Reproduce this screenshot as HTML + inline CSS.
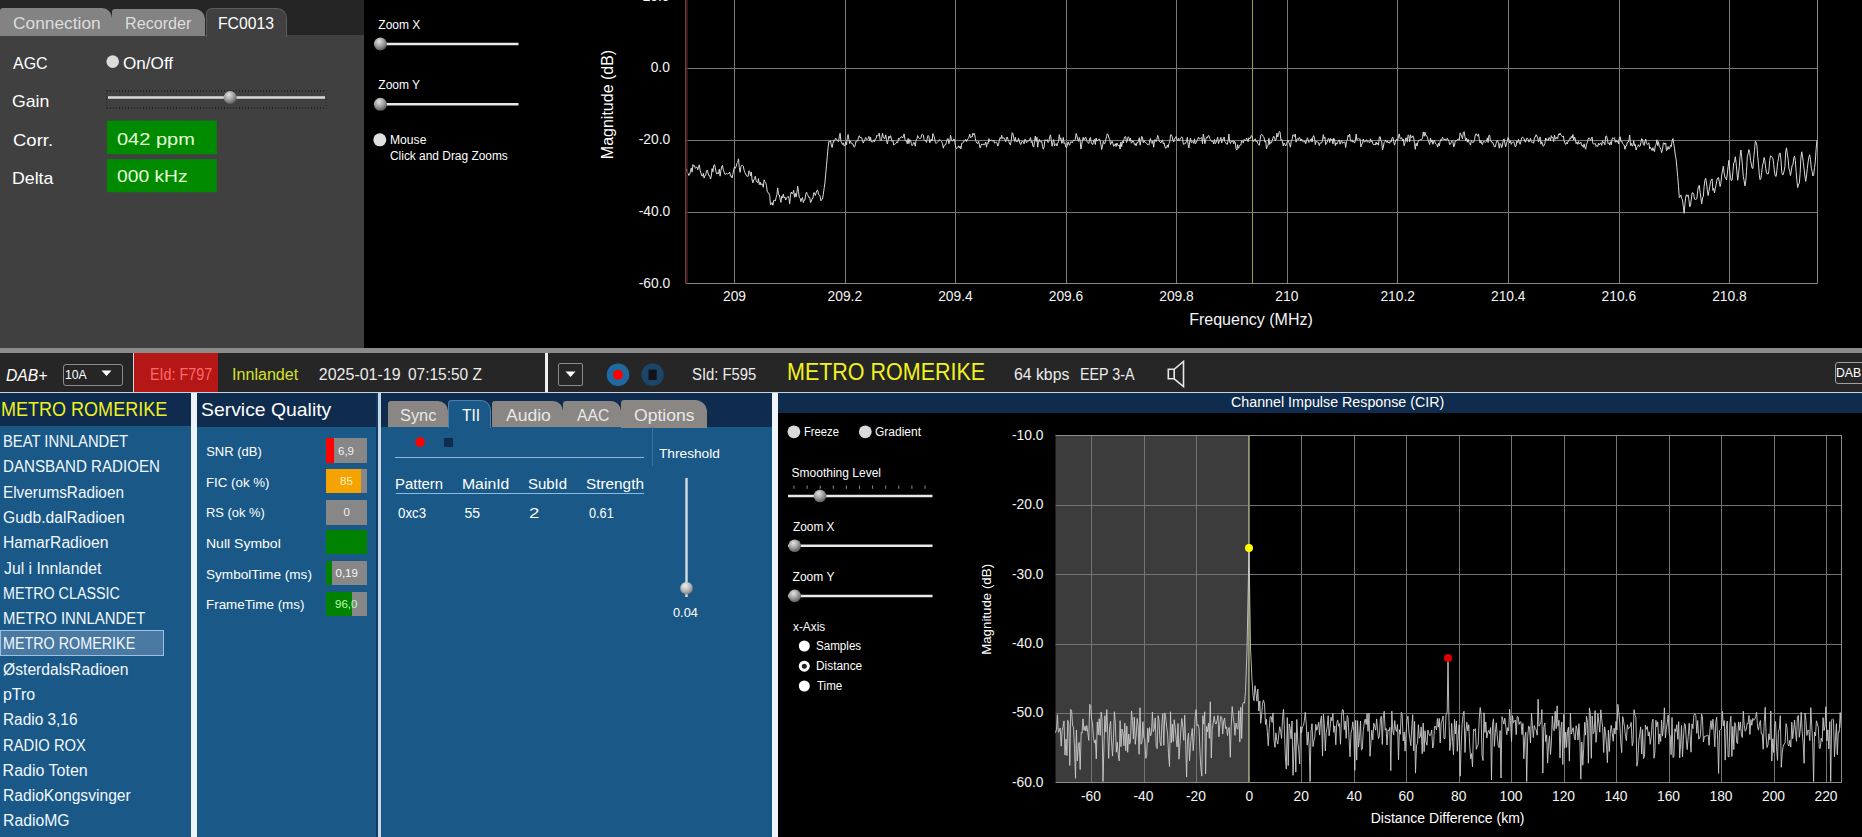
<!DOCTYPE html>
<html><head><meta charset="utf-8"><title>DAB receiver</title>
<style>
html,body{margin:0;padding:0;}
body{width:1862px;height:837px;overflow:hidden;background:#000;position:relative;font-family:"Liberation Sans",sans-serif;}
.t{position:absolute;white-space:nowrap;font-size:16px;line-height:16px;transform-origin:0 0;}
svg{position:absolute;left:0;top:0;}
</style></head><body>
<div style="position:absolute;left:0px;top:0px;width:363.5px;height:35px;background:#252525;"></div><div style="position:absolute;left:0px;top:35px;width:363.5px;height:313px;background:#404040;"></div><div style="position:absolute;left:0px;top:8px;width:112px;height:28px;background:#838383;border-radius:3px 10px 0 0"></div><div style="position:absolute;left:112px;top:8.5px;width:92.5px;height:27.5px;background:#838383;border-radius:3px 10px 0 0"></div><div style="position:absolute;left:205.5px;top:8px;width:81.0px;height:29px;background:#404040;box-sizing:border-box;border:1px solid #5c5c5c;border-bottom:none;border-radius:6px 10px 0 0"></div><div style="position:absolute;left:0px;top:348px;width:1862px;height:5px;background:#8b8b8b;"></div><div style="position:absolute;left:0px;top:353px;width:1862px;height:39px;background:#262626;"></div><div style="position:absolute;left:133px;top:353px;width:1px;height:39px;background:#d8d8d8;"></div><div style="position:absolute;left:134px;top:353px;width:84px;height:39px;background:#b51616;"></div><div style="position:absolute;left:63px;top:363.5px;width:60px;height:22.0px;background:transparent;box-sizing:border-box;border:1px solid #8c8c8c;border-radius:3px"></div><div style="position:absolute;left:545px;top:353px;width:3px;height:39px;background:#f0f0f0;"></div><div style="position:absolute;left:558px;top:363px;width:25px;height:23px;background:transparent;box-sizing:border-box;border:1px solid #8c8c8c;border-radius:2px"></div><div style="position:absolute;left:1835px;top:362px;width:35px;height:22px;background:transparent;box-sizing:border-box;border:1px solid #a0a0a0;border-radius:3px"></div><div style="position:absolute;left:0px;top:392px;width:1862px;height:1px;background:#c2d2e2;"></div><div style="position:absolute;left:0px;top:393px;width:192px;height:33px;background:#0f2b4d;"></div><div style="position:absolute;left:0px;top:426px;width:192px;height:411px;background:#1a5987;"></div><div style="position:absolute;left:186px;top:426px;width:5px;height:411px;background:#1f5784;"></div><div style="position:absolute;left:191px;top:393px;width:6px;height:444px;background:#eef3f8;"></div><div style="position:absolute;left:197px;top:393px;width:180px;height:33.5px;background:#0f2b4d;"></div><div style="position:absolute;left:197px;top:426.5px;width:180px;height:410.5px;background:#1a5987;"></div><div style="position:absolute;left:376px;top:393px;width:2px;height:444px;background:#123a60;"></div><div style="position:absolute;left:378px;top:393px;width:3px;height:444px;background:#c8d8e8;"></div><div style="position:absolute;left:381px;top:393px;width:391px;height:34px;background:#0f2b4d;"></div><div style="position:absolute;left:381px;top:427px;width:391px;height:410px;background:#1a5987;"></div><div style="position:absolute;left:772px;top:393px;width:6px;height:444px;background:#eef4f8;"></div><div style="position:absolute;left:778px;top:393px;width:1084px;height:20px;background:#0f2b4d;"></div><div style="position:absolute;left:778px;top:413px;width:1084px;height:424px;background:#000000;"></div><div style="position:absolute;left:0px;top:630px;width:164px;height:26px;background:#4a79a2;box-sizing:border-box;border:1px solid #9dc1e2"></div><div style="position:absolute;left:326.4px;top:438.2px;width:40.30000000000001px;height:24.5px;background:#878787;"></div><div style="position:absolute;left:326.4px;top:438.2px;width:7.5px;height:24.5px;background:#ff0000;"></div><div style="position:absolute;left:326.4px;top:468.9px;width:40.30000000000001px;height:24.5px;background:#878787;"></div><div style="position:absolute;left:326.4px;top:468.9px;width:34.30000000000001px;height:24.5px;background:#f5a300;"></div><div style="position:absolute;left:326.4px;top:500.2px;width:40.30000000000001px;height:24.500000000000057px;background:#878787;"></div><div style="position:absolute;left:326.4px;top:529.8px;width:40.30000000000001px;height:24.5px;background:#878787;"></div><div style="position:absolute;left:326.4px;top:529.8px;width:40.30000000000001px;height:24.5px;background:#008200;"></div><div style="position:absolute;left:326.4px;top:560.5px;width:40.30000000000001px;height:24.5px;background:#878787;"></div><div style="position:absolute;left:326.4px;top:560.5px;width:5.399999999999977px;height:24.5px;background:#008200;"></div><div style="position:absolute;left:326.4px;top:591.9px;width:40.30000000000001px;height:24.5px;background:#878787;"></div><div style="position:absolute;left:326.4px;top:591.9px;width:25.69999999999999px;height:24.5px;background:#008200;"></div><div style="position:absolute;left:388.2px;top:400.5px;width:60.0px;height:26.899999999999977px;background:#898684;border-radius:3px 10px 0 0"></div><div style="position:absolute;left:492.2px;top:400.5px;width:71.09999999999997px;height:26.899999999999977px;background:#898684;border-radius:3px 10px 0 0"></div><div style="position:absolute;left:563.3px;top:400.5px;width:57.700000000000045px;height:26.899999999999977px;background:#898684;border-radius:3px 10px 0 0"></div><div style="position:absolute;left:621.3px;top:400.4px;width:85.80000000000007px;height:27.200000000000045px;background:#898684;border-radius:3px 12px 0 0"></div><div style="position:absolute;left:448.2px;top:400.3px;width:43.30000000000001px;height:27.69999999999999px;background:#1a5987;box-sizing:border-box;border:1px solid #4f80aa;border-bottom:none;border-radius:4px 10px 0 0"></div><div style="position:absolute;left:444.3px;top:437.6px;width:9.199999999999989px;height:9.599999999999966px;background:#0f2c4e;"></div><div style="position:absolute;left:394.5px;top:457px;width:249.70000000000005px;height:1.1999999999999886px;background:#8cbbe2;"></div><div style="position:absolute;left:396px;top:492.5px;width:248px;height:1.1999999999999886px;background:#8cbbe2;"></div><div style="position:absolute;left:652.3px;top:427px;width:1.0px;height:39px;background:#3a72a2;"></div>
<svg width="1862" height="837" viewBox="0 0 1862 837"><defs><radialGradient id="thumb" cx="0.4" cy="0.3" r="0.75"><stop offset="0" stop-color="#e2e2e2"/><stop offset="0.5" stop-color="#a0a0a0"/><stop offset="1" stop-color="#505050"/></radialGradient><radialGradient id="thumbb" cx="0.4" cy="0.3" r="0.75"><stop offset="0" stop-color="#eeeeee"/><stop offset="0.55" stop-color="#b8b8b8"/><stop offset="1" stop-color="#7a7a7a"/></radialGradient><clipPath id="specclip"><rect x="686" y="-10" width="1132" height="294"/></clipPath><clipPath id="circlip"><rect x="1055" y="435" width="786" height="347"/></clipPath></defs><circle cx="112.7" cy="61.6" r="6.3" fill="#dcdcdc"/><line x1="107" y1="91" x2="326" y2="91" stroke="#262626" stroke-width="2" stroke-dasharray="1,2"/><line x1="107" y1="108" x2="326" y2="108" stroke="#262626" stroke-width="2" stroke-dasharray="1,2"/><line x1="106.5" y1="90" x2="106.5" y2="109" stroke="#262626" stroke-width="1" stroke-dasharray="1,2"/><line x1="326.5" y1="90" x2="326.5" y2="109" stroke="#262626" stroke-width="1" stroke-dasharray="1,2"/><line x1="108" y1="97.5" x2="325" y2="97.5" stroke="#dadada" stroke-width="2.4"/><circle cx="230.2" cy="97.5" r="6.5" fill="url(#thumb)"/><rect x="107" y="120.6" width="109.8" height="33.6" fill="#008a00"/><rect x="107" y="159.2" width="109.8" height="33" fill="#008a00"/><line x1="381" y1="44" x2="518.5" y2="44" stroke="#e8e8e8" stroke-width="2.5"/><circle cx="380.4" cy="44" r="6.5" fill="url(#thumb)"/><line x1="381" y1="104.3" x2="518.5" y2="104.3" stroke="#e8e8e8" stroke-width="2.5"/><circle cx="380.4" cy="104.3" r="6.5" fill="url(#thumb)"/><circle cx="379.8" cy="139.8" r="6.5" fill="#e0e0e0"/><line x1="686" y1="-3.5" x2="1817.3" y2="-3.5" stroke="#7a7a7a" stroke-width="1"/><line x1="686" y1="68.5" x2="1817.3" y2="68.5" stroke="#7a7a7a" stroke-width="1"/><line x1="686" y1="140.5" x2="1817.3" y2="140.5" stroke="#7a7a7a" stroke-width="1"/><line x1="686" y1="212.5" x2="1817.3" y2="212.5" stroke="#7a7a7a" stroke-width="1"/><line x1="734.5" y1="-10" x2="734.5" y2="283.5" stroke="#7a7a7a" stroke-width="1"/><line x1="845.5" y1="-10" x2="845.5" y2="283.5" stroke="#7a7a7a" stroke-width="1"/><line x1="955.5" y1="-10" x2="955.5" y2="283.5" stroke="#7a7a7a" stroke-width="1"/><line x1="1066.5" y1="-10" x2="1066.5" y2="283.5" stroke="#7a7a7a" stroke-width="1"/><line x1="1176.5" y1="-10" x2="1176.5" y2="283.5" stroke="#7a7a7a" stroke-width="1"/><line x1="1287.5" y1="-10" x2="1287.5" y2="283.5" stroke="#7a7a7a" stroke-width="1"/><line x1="1397.5" y1="-10" x2="1397.5" y2="283.5" stroke="#7a7a7a" stroke-width="1"/><line x1="1508.5" y1="-10" x2="1508.5" y2="283.5" stroke="#7a7a7a" stroke-width="1"/><line x1="1619.5" y1="-10" x2="1619.5" y2="283.5" stroke="#7a7a7a" stroke-width="1"/><line x1="1729.5" y1="-10" x2="1729.5" y2="283.5" stroke="#7a7a7a" stroke-width="1"/><line x1="1817.5" y1="-10" x2="1817.5" y2="283.5" stroke="#8a8a8a" stroke-width="1"/><line x1="686" y1="283.5" x2="1817.3" y2="283.5" stroke="#8a8a8a" stroke-width="1"/><line x1="1252.5" y1="-10" x2="1252.5" y2="283.5" stroke="#8c9a4c" stroke-width="1.1"/><path d="M686.5,169.0 L687.3,171.9 L688.1,173.5 L688.9,175.5 L689.7,174.4 L690.5,171.1 L691.3,167.9 L692.1,172.2 L692.9,164.6 L693.7,166.2 L694.5,165.6 L695.3,168.4 L696.1,167.6 L696.9,166.9 L697.7,169.7 L698.5,167.2 L699.3,164.8 L700.1,170.3 L700.9,172.9 L701.7,175.8 L702.5,176.1 L703.3,173.4 L704.1,178.1 L704.9,175.5 L705.7,175.3 L706.5,170.8 L707.3,170.0 L708.1,173.1 L708.9,175.8 L709.7,175.7 L710.5,179.1 L711.3,176.2 L712.1,168.5 L712.9,171.9 L713.7,165.8 L714.5,164.6 L715.3,167.9 L716.1,172.2 L716.9,174.1 L717.7,172.7 L718.5,173.7 L719.3,169.0 L720.1,176.2 L720.9,170.3 L721.7,166.8 L722.5,165.2 L723.3,170.2 L724.1,171.9 L724.9,174.3 L725.7,174.1 L726.5,173.4 L727.3,174.1 L728.1,173.4 L728.9,173.5 L729.7,172.0 L730.5,176.1 L731.3,176.0 L732.1,177.9 L732.9,174.2 L733.7,170.0 L734.5,166.7 L735.3,168.3 L736.1,166.6 L736.9,163.3 L737.7,162.5 L738.5,158.8 L739.3,167.7 L740.1,172.4 L740.9,166.8 L741.7,165.4 L742.5,165.4 L743.3,166.1 L744.1,170.3 L744.9,172.5 L745.7,174.0 L746.5,175.8 L747.3,176.2 L748.1,176.5 L748.9,170.7 L749.7,171.3 L750.5,175.9 L751.3,172.0 L752.1,179.9 L752.9,182.8 L753.7,180.0 L754.5,178.7 L755.3,176.2 L756.1,180.5 L756.9,182.0 L757.7,182.6 L758.5,178.6 L759.3,184.6 L760.1,182.0 L760.9,185.1 L761.7,183.7 L762.5,184.1 L763.3,187.3 L764.1,179.8 L764.9,181.7 L765.7,182.5 L766.5,185.7 L767.3,192.0 L768.1,192.8 L768.9,193.2 L769.7,195.6 L770.5,205.0 L771.3,204.1 L772.1,202.5 L772.9,205.3 L773.7,200.3 L774.5,200.4 L775.3,201.0 L776.1,197.7 L776.9,194.7 L777.7,187.9 L778.5,194.7 L779.3,194.9 L780.1,198.8 L780.9,202.3 L781.7,196.2 L782.5,197.7 L783.3,194.1 L784.1,198.0 L784.9,197.0 L785.7,200.0 L786.5,197.9 L787.3,197.4 L788.1,196.4 L788.9,198.2 L789.7,203.7 L790.5,194.8 L791.3,192.0 L792.1,193.8 L792.9,193.0 L793.7,190.4 L794.5,197.2 L795.3,193.4 L796.1,197.1 L796.9,192.6 L797.7,186.2 L798.5,191.9 L799.3,197.3 L800.1,198.3 L800.9,201.6 L801.7,198.7 L802.5,197.5 L803.3,202.6 L804.1,200.3 L804.9,200.1 L805.7,194.3 L806.5,192.1 L807.3,194.4 L808.1,195.8 L808.9,197.6 L809.7,197.2 L810.5,202.7 L811.3,201.3 L812.1,198.6 L812.9,198.5 L813.7,192.8 L814.5,192.8 L815.3,195.5 L816.1,192.9 L816.9,190.5 L817.7,190.3 L818.5,194.4 L819.3,194.9 L820.1,196.2 L820.9,200.8 L821.7,199.3 L822.5,199.0 L823.3,194.3 L824.1,188.6 L824.9,182.8 L825.7,174.1 L826.5,165.3 L827.3,156.5 L828.1,147.3 L828.9,141.3 L829.7,142.0 L830.5,140.5 L831.3,145.1 L832.1,147.5 L832.9,143.5 L833.7,140.4 L834.5,141.0 L835.3,138.5 L836.1,138.5 L836.9,139.9 L837.7,140.7 L838.5,141.7 L839.3,136.9 L840.1,133.2 L840.9,141.2 L841.7,142.8 L842.5,144.5 L843.3,142.9 L844.1,145.9 L844.9,145.7 L845.7,141.9 L846.5,144.8 L847.3,137.7 L848.1,134.5 L848.9,139.5 L849.7,143.5 L850.5,141.1 L851.3,142.6 L852.1,143.9 L852.9,143.9 L853.7,146.6 L854.5,147.1 L855.3,144.9 L856.1,140.9 L856.9,141.3 L857.7,140.8 L858.5,137.4 L859.3,135.7 L860.1,137.8 L860.9,137.2 L861.7,137.7 L862.5,140.9 L863.3,143.1 L864.1,141.2 L864.9,139.6 L865.7,137.5 L866.5,139.5 L867.3,139.5 L868.1,138.5 L868.9,136.4 L869.7,141.0 L870.5,137.2 L871.3,141.7 L872.1,142.1 L872.9,141.7 L873.7,139.9 L874.5,141.9 L875.3,138.8 L876.1,138.5 L876.9,135.3 L877.7,136.2 L878.5,135.1 L879.3,133.2 L880.1,139.6 L880.9,140.7 L881.7,138.4 L882.5,133.2 L883.3,136.5 L884.1,138.4 L884.9,138.6 L885.7,134.8 L886.5,139.7 L887.3,143.9 L888.1,140.4 L888.9,136.1 L889.7,138.2 L890.5,135.7 L891.3,138.3 L892.1,141.4 L892.9,140.4 L893.7,145.1 L894.5,144.2 L895.3,143.8 L896.1,143.3 L896.9,141.8 L897.7,142.8 L898.5,138.0 L899.3,139.5 L900.1,138.1 L900.9,137.1 L901.7,136.4 L902.5,138.0 L903.3,136.6 L904.1,133.9 L904.9,139.2 L905.7,141.1 L906.5,140.7 L907.3,143.9 L908.1,138.4 L908.9,143.6 L909.7,139.6 L910.5,140.1 L911.3,143.4 L912.1,145.6 L912.9,144.5 L913.7,142.3 L914.5,142.9 L915.3,146.2 L916.1,139.9 L916.9,139.2 L917.7,135.6 L918.5,137.7 L919.3,138.4 L920.1,138.8 L920.9,137.9 L921.7,134.7 L922.5,134.2 L923.3,135.0 L924.1,139.6 L924.9,140.7 L925.7,140.6 L926.5,142.5 L927.3,138.3 L928.1,135.4 L928.9,136.3 L929.7,143.0 L930.5,141.1 L931.3,138.9 L932.1,141.0 L932.9,133.6 L933.7,135.7 L934.5,137.9 L935.3,142.2 L936.1,143.5 L936.9,142.6 L937.7,141.7 L938.5,141.2 L939.3,139.6 L940.1,140.3 L940.9,141.1 L941.7,141.7 L942.5,143.8 L943.3,148.2 L944.1,145.4 L944.9,145.0 L945.7,144.7 L946.5,142.3 L947.3,138.9 L948.1,138.6 L948.9,143.7 L949.7,142.3 L950.5,135.3 L951.3,138.4 L952.1,140.9 L952.9,140.9 L953.7,139.1 L954.5,139.3 L955.3,145.1 L956.1,148.4 L956.9,148.5 L957.7,147.6 L958.5,145.8 L959.3,147.8 L960.1,146.2 L960.9,148.9 L961.7,143.2 L962.5,143.0 L963.3,142.6 L964.1,140.6 L964.9,141.0 L965.7,139.3 L966.5,141.7 L967.3,140.0 L968.1,138.7 L968.9,137.2 L969.7,134.2 L970.5,137.7 L971.3,136.8 L972.1,137.0 L972.9,133.1 L973.7,134.7 L974.5,133.6 L975.3,138.3 L976.1,141.7 L976.9,143.1 L977.7,143.6 L978.5,141.2 L979.3,144.2 L980.1,147.9 L980.9,145.7 L981.7,144.0 L982.5,144.6 L983.3,144.0 L984.1,145.1 L984.9,144.1 L985.7,142.0 L986.5,147.2 L987.3,142.7 L988.1,143.5 L988.9,138.6 L989.7,141.4 L990.5,140.5 L991.3,140.2 L992.1,140.3 L992.9,141.3 L993.7,140.1 L994.5,143.1 L995.3,142.5 L996.1,142.0 L996.9,142.6 L997.7,146.1 L998.5,144.9 L999.3,140.0 L1000.1,137.7 L1000.9,139.1 L1001.7,135.3 L1002.5,138.5 L1003.3,138.1 L1004.1,137.8 L1004.9,139.7 L1005.7,141.8 L1006.5,138.1 L1007.3,137.0 L1008.1,140.0 L1008.9,141.6 L1009.7,144.3 L1010.5,144.9 L1011.3,140.0 L1012.1,132.7 L1012.9,133.6 L1013.7,137.8 L1014.5,141.4 L1015.3,137.4 L1016.1,141.5 L1016.9,141.4 L1017.7,141.8 L1018.5,138.3 L1019.3,140.9 L1020.1,143.9 L1020.9,144.5 L1021.7,142.0 L1022.5,140.9 L1023.3,141.9 L1024.1,143.8 L1024.9,139.2 L1025.7,139.8 L1026.5,142.9 L1027.3,141.1 L1028.1,141.0 L1028.9,141.0 L1029.7,140.1 L1030.5,137.5 L1031.3,142.7 L1032.1,141.3 L1032.9,146.0 L1033.7,147.1 L1034.5,141.7 L1035.3,136.0 L1036.1,141.5 L1036.9,137.2 L1037.7,147.2 L1038.5,141.2 L1039.3,139.4 L1040.1,141.9 L1040.9,141.6 L1041.7,141.3 L1042.5,146.4 L1043.3,149.2 L1044.1,146.9 L1044.9,139.8 L1045.7,140.2 L1046.5,140.5 L1047.3,139.6 L1048.1,142.7 L1048.9,141.3 L1049.7,136.9 L1050.5,134.8 L1051.3,140.2 L1052.1,146.3 L1052.9,142.3 L1053.7,139.6 L1054.5,146.0 L1055.3,144.5 L1056.1,143.6 L1056.9,146.0 L1057.7,143.3 L1058.5,141.4 L1059.3,134.6 L1060.1,139.6 L1060.9,137.9 L1061.7,143.3 L1062.5,142.7 L1063.3,137.5 L1064.1,143.7 L1064.9,142.7 L1065.7,146.7 L1066.5,147.9 L1067.3,145.4 L1068.1,141.8 L1068.9,144.6 L1069.7,145.2 L1070.5,141.9 L1071.3,141.7 L1072.1,142.9 L1072.9,141.2 L1073.7,140.0 L1074.5,140.7 L1075.3,139.3 L1076.1,133.5 L1076.9,135.8 L1077.7,139.5 L1078.5,141.4 L1079.3,137.5 L1080.1,140.4 L1080.9,149.1 L1081.7,144.6 L1082.5,140.1 L1083.3,137.3 L1084.1,140.0 L1084.9,138.2 L1085.7,137.1 L1086.5,140.1 L1087.3,141.9 L1088.1,142.9 L1088.9,143.4 L1089.7,138.7 L1090.5,137.4 L1091.3,142.7 L1092.1,144.2 L1092.9,144.4 L1093.7,140.5 L1094.5,139.3 L1095.3,144.5 L1096.1,138.0 L1096.9,141.1 L1097.7,140.6 L1098.5,139.6 L1099.3,138.8 L1100.1,140.7 L1100.9,144.1 L1101.7,149.5 L1102.5,146.2 L1103.3,141.3 L1104.1,143.7 L1104.9,143.5 L1105.7,139.8 L1106.5,136.9 L1107.3,133.8 L1108.1,134.8 L1108.9,138.0 L1109.7,139.3 L1110.5,144.5 L1111.3,142.9 L1112.1,141.1 L1112.9,143.6 L1113.7,146.4 L1114.5,145.2 L1115.3,143.7 L1116.1,146.5 L1116.9,143.0 L1117.7,144.9 L1118.5,146.0 L1119.3,144.8 L1120.1,149.0 L1120.9,142.0 L1121.7,146.6 L1122.5,141.4 L1123.3,143.0 L1124.1,138.7 L1124.9,136.8 L1125.7,136.6 L1126.5,142.5 L1127.3,140.7 L1128.1,136.8 L1128.9,137.5 L1129.7,141.1 L1130.5,138.2 L1131.3,143.2 L1132.1,142.3 L1132.9,140.7 L1133.7,141.9 L1134.5,144.6 L1135.3,143.7 L1136.1,145.8 L1136.9,142.6 L1137.7,142.9 L1138.5,140.7 L1139.3,137.7 L1140.1,145.2 L1140.9,140.8 L1141.7,136.4 L1142.5,137.3 L1143.3,142.8 L1144.1,140.6 L1144.9,142.3 L1145.7,142.6 L1146.5,143.2 L1147.3,144.5 L1148.1,144.4 L1148.9,145.2 L1149.7,140.8 L1150.5,138.5 L1151.3,142.7 L1152.1,143.5 L1152.9,140.8 L1153.7,147.2 L1154.5,139.9 L1155.3,139.9 L1156.1,141.6 L1156.9,139.3 L1157.7,135.4 L1158.5,137.5 L1159.3,141.6 L1160.1,141.7 L1160.9,142.9 L1161.7,141.1 L1162.5,139.8 L1163.3,144.0 L1164.1,142.8 L1164.9,146.5 L1165.7,148.4 L1166.5,147.5 L1167.3,145.2 L1168.1,147.5 L1168.9,143.5 L1169.7,142.8 L1170.5,135.1 L1171.3,134.7 L1172.1,136.6 L1172.9,140.0 L1173.7,141.9 L1174.5,138.6 L1175.3,138.4 L1176.1,136.6 L1176.9,139.4 L1177.7,140.9 L1178.5,138.2 L1179.3,140.7 L1180.1,139.2 L1180.9,138.0 L1181.7,136.8 L1182.5,137.6 L1183.3,144.1 L1184.1,144.4 L1184.9,143.2 L1185.7,143.2 L1186.5,141.6 L1187.3,137.4 L1188.1,144.4 L1188.9,147.9 L1189.7,142.0 L1190.5,138.1 L1191.3,142.6 L1192.1,142.4 L1192.9,141.4 L1193.7,143.4 L1194.5,138.9 L1195.3,143.9 L1196.1,142.8 L1196.9,141.0 L1197.7,139.3 L1198.5,137.1 L1199.3,139.2 L1200.1,138.7 L1200.9,137.9 L1201.7,137.6 L1202.5,143.7 L1203.3,134.1 L1204.1,137.8 L1204.9,143.7 L1205.7,139.7 L1206.5,137.3 L1207.3,137.9 L1208.1,135.7 L1208.9,135.6 L1209.7,138.5 L1210.5,139.4 L1211.3,141.2 L1212.1,141.5 L1212.9,141.4 L1213.7,144.0 L1214.5,139.4 L1215.3,143.7 L1216.1,142.5 L1216.9,139.6 L1217.7,137.1 L1218.5,143.6 L1219.3,141.5 L1220.1,140.0 L1220.9,137.4 L1221.7,142.9 L1222.5,139.5 L1223.3,139.6 L1224.1,137.0 L1224.9,141.6 L1225.7,142.7 L1226.5,144.1 L1227.3,144.3 L1228.1,140.6 L1228.9,134.1 L1229.7,142.1 L1230.5,143.5 L1231.3,141.0 L1232.1,141.7 L1232.9,140.3 L1233.7,143.9 L1234.5,141.3 L1235.3,142.3 L1236.1,148.9 L1236.9,149.9 L1237.7,144.7 L1238.5,148.3 L1239.3,146.5 L1240.1,144.9 L1240.9,145.1 L1241.7,140.7 L1242.5,142.2 L1243.3,142.9 L1244.1,139.4 L1244.9,140.2 L1245.7,141.0 L1246.5,138.0 L1247.3,139.4 L1248.1,141.7 L1248.9,137.7 L1249.7,139.0 L1250.5,138.1 L1251.3,135.6 L1252.1,136.4 L1252.9,141.0 L1253.7,141.3 L1254.5,139.9 L1255.3,138.8 L1256.1,141.7 L1256.9,140.7 L1257.7,143.5 L1258.5,144.0 L1259.3,145.3 L1260.1,139.9 L1260.9,134.9 L1261.7,134.3 L1262.5,135.0 L1263.3,136.6 L1264.1,137.8 L1264.9,142.1 L1265.7,141.0 L1266.5,148.8 L1267.3,145.9 L1268.1,145.5 L1268.9,138.4 L1269.7,144.4 L1270.5,142.2 L1271.3,142.9 L1272.1,140.8 L1272.9,138.3 L1273.7,136.2 L1274.5,137.5 L1275.3,140.9 L1276.1,139.6 L1276.9,133.2 L1277.7,137.0 L1278.5,134.4 L1279.3,131.4 L1280.1,132.3 L1280.9,140.2 L1281.7,139.5 L1282.5,142.0 L1283.3,145.9 L1284.1,143.0 L1284.9,144.7 L1285.7,146.0 L1286.5,143.6 L1287.3,141.9 L1288.1,140.0 L1288.9,142.4 L1289.7,144.7 L1290.5,147.2 L1291.3,140.1 L1292.1,139.7 L1292.9,134.8 L1293.7,135.0 L1294.5,136.6 L1295.3,134.1 L1296.1,142.2 L1296.9,139.5 L1297.7,138.5 L1298.5,139.8 L1299.3,137.3 L1300.1,138.8 L1300.9,141.1 L1301.7,138.9 L1302.5,141.2 L1303.3,141.5 L1304.1,142.2 L1304.9,140.9 L1305.7,143.8 L1306.5,141.4 L1307.3,137.8 L1308.1,139.6 L1308.9,142.5 L1309.7,141.6 L1310.5,140.0 L1311.3,138.7 L1312.1,142.1 L1312.9,137.0 L1313.7,135.6 L1314.5,138.1 L1315.3,144.5 L1316.1,141.2 L1316.9,142.0 L1317.7,141.9 L1318.5,143.0 L1319.3,145.6 L1320.1,142.9 L1320.9,143.1 L1321.7,142.9 L1322.5,140.2 L1323.3,134.6 L1324.1,138.7 L1324.9,137.2 L1325.7,144.6 L1326.5,143.0 L1327.3,142.0 L1328.1,138.7 L1328.9,138.6 L1329.7,142.6 L1330.5,138.4 L1331.3,140.1 L1332.1,139.0 L1332.9,144.0 L1333.7,138.2 L1334.5,139.1 L1335.3,145.6 L1336.1,142.8 L1336.9,144.2 L1337.7,142.4 L1338.5,140.4 L1339.3,140.0 L1340.1,144.2 L1340.9,141.8 L1341.7,140.5 L1342.5,143.4 L1343.3,142.2 L1344.1,142.3 L1344.9,142.1 L1345.7,147.5 L1346.5,141.4 L1347.3,140.0 L1348.1,135.2 L1348.9,136.7 L1349.7,134.1 L1350.5,141.0 L1351.3,141.4 L1352.1,139.8 L1352.9,142.2 L1353.7,141.1 L1354.5,143.1 L1355.3,141.3 L1356.1,134.1 L1356.9,139.8 L1357.7,138.8 L1358.5,138.4 L1359.3,139.0 L1360.1,138.9 L1360.9,146.9 L1361.7,144.1 L1362.5,143.7 L1363.3,139.0 L1364.1,141.9 L1364.9,141.9 L1365.7,141.0 L1366.5,139.7 L1367.3,142.0 L1368.1,141.3 L1368.9,142.4 L1369.7,142.7 L1370.5,138.8 L1371.3,141.7 L1372.1,140.8 L1372.9,143.9 L1373.7,145.0 L1374.5,144.2 L1375.3,145.1 L1376.1,142.1 L1376.9,144.4 L1377.7,143.1 L1378.5,145.2 L1379.3,137.1 L1380.1,136.6 L1380.9,140.6 L1381.7,141.9 L1382.5,149.9 L1383.3,147.0 L1384.1,142.7 L1384.9,141.5 L1385.7,139.9 L1386.5,142.3 L1387.3,140.9 L1388.1,142.9 L1388.9,141.8 L1389.7,143.3 L1390.5,140.9 L1391.3,141.7 L1392.1,137.7 L1392.9,137.2 L1393.7,141.5 L1394.5,145.1 L1395.3,142.3 L1396.1,139.6 L1396.9,139.2 L1397.7,141.1 L1398.5,135.6 L1399.3,133.9 L1400.1,138.6 L1400.9,138.6 L1401.7,137.5 L1402.5,140.9 L1403.3,139.1 L1404.1,145.7 L1404.9,143.4 L1405.7,138.0 L1406.5,138.0 L1407.3,141.8 L1408.1,134.9 L1408.9,135.6 L1409.7,141.7 L1410.5,134.8 L1411.3,137.7 L1412.1,137.6 L1412.9,135.8 L1413.7,137.8 L1414.5,143.6 L1415.3,149.3 L1416.1,143.3 L1416.9,146.0 L1417.7,142.9 L1418.5,140.4 L1419.3,140.4 L1420.1,139.4 L1420.9,139.9 L1421.7,139.6 L1422.5,137.8 L1423.3,131.9 L1424.1,136.3 L1424.9,132.1 L1425.7,135.4 L1426.5,135.4 L1427.3,137.2 L1428.1,140.1 L1428.9,142.3 L1429.7,144.5 L1430.5,138.0 L1431.3,142.2 L1432.1,139.9 L1432.9,144.3 L1433.7,141.7 L1434.5,140.0 L1435.3,143.3 L1436.1,143.8 L1436.9,144.7 L1437.7,147.1 L1438.5,143.2 L1439.3,145.8 L1440.1,141.6 L1440.9,139.3 L1441.7,140.5 L1442.5,137.2 L1443.3,138.4 L1444.1,139.9 L1444.9,138.9 L1445.7,140.0 L1446.5,140.2 L1447.3,138.1 L1448.1,139.7 L1448.9,141.3 L1449.7,144.7 L1450.5,144.1 L1451.3,142.2 L1452.1,140.5 L1452.9,141.4 L1453.7,146.9 L1454.5,145.1 L1455.3,140.8 L1456.1,141.2 L1456.9,140.1 L1457.7,139.2 L1458.5,138.9 L1459.3,140.1 L1460.1,132.9 L1460.9,134.7 L1461.7,136.6 L1462.5,138.8 L1463.3,132.5 L1464.1,131.6 L1464.9,136.6 L1465.7,140.7 L1466.5,138.1 L1467.3,142.2 L1468.1,139.3 L1468.9,142.3 L1469.7,143.2 L1470.5,145.1 L1471.3,140.4 L1472.1,141.7 L1472.9,142.8 L1473.7,142.2 L1474.5,139.6 L1475.3,134.9 L1476.1,133.7 L1476.9,135.0 L1477.7,136.2 L1478.5,133.9 L1479.3,139.4 L1480.1,143.0 L1480.9,140.5 L1481.7,143.9 L1482.5,144.5 L1483.3,141.6 L1484.1,141.5 L1484.9,142.1 L1485.7,142.1 L1486.5,141.3 L1487.3,137.9 L1488.1,142.6 L1488.9,135.4 L1489.7,135.3 L1490.5,141.0 L1491.3,141.0 L1492.1,142.9 L1492.9,142.5 L1493.7,145.0 L1494.5,147.0 L1495.3,146.8 L1496.1,143.3 L1496.9,140.8 L1497.7,140.7 L1498.5,143.3 L1499.3,148.2 L1500.1,143.5 L1500.9,144.4 L1501.7,147.6 L1502.5,145.0 L1503.3,139.8 L1504.1,138.8 L1504.9,143.7 L1505.7,146.9 L1506.5,142.9 L1507.3,141.2 L1508.1,137.4 L1508.9,140.0 L1509.7,142.9 L1510.5,140.7 L1511.3,144.3 L1512.1,142.4 L1512.9,142.2 L1513.7,141.8 L1514.5,143.9 L1515.3,146.9 L1516.1,145.7 L1516.9,140.9 L1517.7,142.7 L1518.5,139.2 L1519.3,142.4 L1520.1,144.3 L1520.9,141.2 L1521.7,137.7 L1522.5,137.1 L1523.3,138.0 L1524.1,138.5 L1524.9,141.7 L1525.7,142.0 L1526.5,138.5 L1527.3,138.2 L1528.1,139.3 L1528.9,142.1 L1529.7,140.8 L1530.5,138.4 L1531.3,141.6 L1532.1,142.6 L1532.9,141.7 L1533.7,143.3 L1534.5,137.3 L1535.3,137.2 L1536.1,134.7 L1536.9,136.0 L1537.7,137.7 L1538.5,142.1 L1539.3,139.5 L1540.1,136.9 L1540.9,144.2 L1541.7,141.6 L1542.5,144.0 L1543.3,146.3 L1544.1,145.2 L1544.9,143.5 L1545.7,138.0 L1546.5,139.9 L1547.3,139.4 L1548.1,140.6 L1548.9,137.6 L1549.7,137.8 L1550.5,140.7 L1551.3,135.6 L1552.1,137.6 L1552.9,137.3 L1553.7,141.6 L1554.5,135.1 L1555.3,138.9 L1556.1,138.9 L1556.9,137.2 L1557.7,138.6 L1558.5,133.9 L1559.3,135.0 L1560.1,133.1 L1560.9,135.0 L1561.7,135.7 L1562.5,137.0 L1563.3,135.9 L1564.1,140.7 L1564.9,143.1 L1565.7,144.4 L1566.5,142.5 L1567.3,144.0 L1568.1,141.1 L1568.9,141.1 L1569.7,138.4 L1570.5,139.0 L1571.3,136.3 L1572.1,138.1 L1572.9,134.5 L1573.7,140.1 L1574.5,137.0 L1575.3,139.0 L1576.1,143.6 L1576.9,142.1 L1577.7,144.4 L1578.5,141.5 L1579.3,143.9 L1580.1,143.0 L1580.9,142.2 L1581.7,145.7 L1582.5,145.5 L1583.3,147.4 L1584.1,143.8 L1584.9,147.6 L1585.7,149.2 L1586.5,144.2 L1587.3,142.6 L1588.1,139.2 L1588.9,137.8 L1589.7,138.5 L1590.5,140.4 L1591.3,138.7 L1592.1,137.1 L1592.9,143.6 L1593.7,143.9 L1594.5,143.9 L1595.3,143.4 L1596.1,146.4 L1596.9,145.5 L1597.7,146.7 L1598.5,143.1 L1599.3,145.0 L1600.1,143.6 L1600.9,143.0 L1601.7,145.4 L1602.5,140.8 L1603.3,142.9 L1604.1,142.3 L1604.9,144.8 L1605.7,136.4 L1606.5,135.9 L1607.3,139.1 L1608.1,143.6 L1608.9,142.8 L1609.7,145.1 L1610.5,141.8 L1611.3,144.8 L1612.1,139.1 L1612.9,137.7 L1613.7,138.5 L1614.5,137.8 L1615.3,142.3 L1616.1,140.3 L1616.9,142.1 L1617.7,141.1 L1618.5,143.9 L1619.3,138.0 L1620.1,136.7 L1620.9,141.4 L1621.7,141.0 L1622.5,143.3 L1623.3,144.3 L1624.1,144.9 L1624.9,149.3 L1625.7,146.1 L1626.5,146.0 L1627.3,142.1 L1628.1,142.3 L1628.9,140.4 L1629.7,135.0 L1630.5,145.4 L1631.3,143.3 L1632.1,146.0 L1632.9,145.8 L1633.7,140.9 L1634.5,145.7 L1635.3,144.5 L1636.1,150.0 L1636.9,147.4 L1637.7,146.4 L1638.5,144.7 L1639.3,146.6 L1640.1,146.1 L1640.9,142.5 L1641.7,138.6 L1642.5,139.4 L1643.3,144.3 L1644.1,145.5 L1644.9,141.3 L1645.7,139.0 L1646.5,143.7 L1647.3,144.5 L1648.1,143.4 L1648.9,142.9 L1649.7,148.8 L1650.5,147.4 L1651.3,149.1 L1652.1,150.6 L1652.9,147.7 L1653.7,150.5 L1654.5,151.7 L1655.3,145.3 L1656.1,144.7 L1656.9,139.8 L1657.7,145.6 L1658.5,141.7 L1659.3,146.7 L1660.1,147.4 L1660.9,149.5 L1661.7,152.6 L1662.5,149.5 L1663.3,143.1 L1664.1,142.7 L1664.9,144.4 L1665.7,143.0 L1666.5,150.7 L1667.3,149.5 L1668.1,146.5 L1668.9,149.2 L1669.7,148.6 L1670.5,145.1 L1671.3,146.6 L1672.1,140.9 L1672.9,138.6 L1673.7,143.5 L1674.5,148.3 L1675.3,155.1 L1676.1,159.1 L1676.9,167.8 L1677.7,176.7 L1678.5,186.2 L1679.3,197.6 L1680.1,196.7 L1680.9,195.1 L1681.7,198.3 L1682.5,199.9 L1683.3,206.3 L1684.1,213.3 L1684.9,204.6 L1685.7,197.3 L1686.5,194.7 L1687.3,196.4 L1688.1,194.9 L1688.9,199.3 L1689.7,206.8 L1690.5,205.5 L1691.3,199.0 L1692.1,193.1 L1692.9,192.7 L1693.7,194.4 L1694.5,199.1 L1695.3,199.4 L1696.1,199.3 L1696.9,198.7 L1697.7,190.5 L1698.5,186.3 L1699.3,185.3 L1700.1,192.4 L1700.9,198.0 L1701.7,203.8 L1702.5,198.0 L1703.3,196.6 L1704.1,186.6 L1704.9,180.4 L1705.7,178.4 L1706.5,183.0 L1707.3,189.9 L1708.1,195.5 L1708.9,191.5 L1709.7,186.9 L1710.5,181.7 L1711.3,180.0 L1712.1,178.9 L1712.9,190.4 L1713.7,188.3 L1714.5,192.9 L1715.3,188.2 L1716.1,184.8 L1716.9,180.0 L1717.7,177.9 L1718.5,177.6 L1719.3,181.9 L1720.1,186.5 L1720.9,183.3 L1721.7,174.9 L1722.5,170.9 L1723.3,166.2 L1724.1,172.7 L1724.9,177.1 L1725.7,178.1 L1726.5,180.0 L1727.3,173.9 L1728.1,166.7 L1728.9,160.3 L1729.7,170.4 L1730.5,177.8 L1731.3,180.6 L1732.1,180.1 L1732.9,171.8 L1733.7,163.1 L1734.5,161.9 L1735.3,156.7 L1736.1,162.8 L1736.9,172.1 L1737.7,180.3 L1738.5,174.7 L1739.3,166.4 L1740.1,156.1 L1740.9,150.0 L1741.7,156.8 L1742.5,166.8 L1743.3,176.7 L1744.1,180.4 L1744.9,185.9 L1745.7,181.9 L1746.5,171.5 L1747.3,156.8 L1748.1,153.8 L1748.9,149.6 L1749.7,152.4 L1750.5,160.4 L1751.3,164.0 L1752.1,168.0 L1752.9,168.6 L1753.7,158.6 L1754.5,150.2 L1755.3,141.2 L1756.1,142.5 L1756.9,145.3 L1757.7,156.4 L1758.5,164.1 L1759.3,175.1 L1760.1,179.7 L1760.9,178.4 L1761.7,172.2 L1762.5,165.1 L1763.3,162.9 L1764.1,157.5 L1764.9,160.6 L1765.7,168.3 L1766.5,172.9 L1767.3,173.9 L1768.1,174.1 L1768.9,170.6 L1769.7,160.4 L1770.5,155.9 L1771.3,156.3 L1772.1,157.6 L1772.9,158.1 L1773.7,164.5 L1774.5,172.0 L1775.3,175.9 L1776.1,176.5 L1776.9,170.2 L1777.7,162.4 L1778.5,158.7 L1779.3,153.6 L1780.1,152.9 L1780.9,158.9 L1781.7,171.8 L1782.5,175.1 L1783.3,174.3 L1784.1,171.0 L1784.9,166.6 L1785.7,152.1 L1786.5,147.8 L1787.3,154.1 L1788.1,158.8 L1788.9,168.0 L1789.7,171.4 L1790.5,175.5 L1791.3,171.0 L1792.1,165.3 L1792.9,165.0 L1793.7,158.3 L1794.5,156.2 L1795.3,160.5 L1796.1,171.2 L1796.9,180.6 L1797.7,187.6 L1798.5,184.0 L1799.3,183.5 L1800.1,173.4 L1800.9,158.1 L1801.7,151.8 L1802.5,156.1 L1803.3,162.3 L1804.1,169.1 L1804.9,176.0 L1805.7,181.4 L1806.5,176.0 L1807.3,168.7 L1808.1,162.0 L1808.9,157.1 L1809.7,154.8 L1810.5,159.7 L1811.3,168.2 L1812.1,171.3 L1812.9,176.0 L1813.7,174.8 L1814.5,167.3 L1815.3,161.9 L1816.1,149.5 L1816.9,140.3" fill="none" stroke="#dadada" stroke-width="1" stroke-linejoin="round" clip-path="url(#specclip)"/><line x1="685.8" y1="-10" x2="685.8" y2="283.5" stroke="#7a6262" stroke-width="1.1"/><line x1="687.2" y1="-10" x2="687.2" y2="283.5" stroke="#5a1212" stroke-width="1.1"/><path d="M101.5,370.5 L111.5,370.5 L106.5,376 Z" fill="#ffffff"/><path d="M565.5,371.5 L575.5,371.5 L570.5,377 Z" fill="#ffffff"/><circle cx="618" cy="374.8" r="11.3" fill="#1f69a1"/><circle cx="618" cy="374.8" r="5" fill="#ff0000"/><circle cx="652.6" cy="374.8" r="11.3" fill="#1c4568"/><rect x="648.5" y="369.5" width="8.2" height="10.5" fill="#101418"/><path d="M1168.3,369.3 L1174.2,369.3 L1183.5,361.5 L1183.5,386.5 L1174.2,378.8 L1168.3,378.8 Z M1174.2,369.3 L1174.2,378.8" fill="none" stroke="#e6e6e6" stroke-width="1.6" stroke-linejoin="miter"/><circle cx="420.1" cy="442.1" r="4.8" fill="#ff0000"/><line x1="686.5" y1="478" x2="686.5" y2="597" stroke="#d4dce4" stroke-width="2.4"/><circle cx="686.5" cy="588.2" r="6.2" fill="url(#thumbb)"/><circle cx="793.9" cy="431.8" r="6.4" fill="#dadada"/><circle cx="865.3" cy="431.8" r="6.4" fill="#dadada"/><line x1="794.0" y1="485.5" x2="794.0" y2="488.8" stroke="#8c8c8c" stroke-width="1"/><line x1="807.1" y1="485.5" x2="807.1" y2="488.8" stroke="#8c8c8c" stroke-width="1"/><line x1="820.2" y1="485.5" x2="820.2" y2="488.8" stroke="#8c8c8c" stroke-width="1"/><line x1="833.3" y1="485.5" x2="833.3" y2="488.8" stroke="#8c8c8c" stroke-width="1"/><line x1="846.4" y1="485.5" x2="846.4" y2="488.8" stroke="#8c8c8c" stroke-width="1"/><line x1="859.5" y1="485.5" x2="859.5" y2="488.8" stroke="#8c8c8c" stroke-width="1"/><line x1="872.6" y1="485.5" x2="872.6" y2="488.8" stroke="#8c8c8c" stroke-width="1"/><line x1="885.7" y1="485.5" x2="885.7" y2="488.8" stroke="#8c8c8c" stroke-width="1"/><line x1="898.8" y1="485.5" x2="898.8" y2="488.8" stroke="#8c8c8c" stroke-width="1"/><line x1="911.9" y1="485.5" x2="911.9" y2="488.8" stroke="#8c8c8c" stroke-width="1"/><line x1="925.0" y1="485.5" x2="925.0" y2="488.8" stroke="#8c8c8c" stroke-width="1"/><line x1="788" y1="496" x2="932.5" y2="496" stroke="#e8e8e8" stroke-width="2.5"/><circle cx="820" cy="496" r="6.3" fill="url(#thumb)"/><line x1="788" y1="545.8" x2="932.5" y2="545.8" stroke="#e8e8e8" stroke-width="2.5"/><circle cx="794.7" cy="545.8" r="6.3" fill="url(#thumb)"/><line x1="788" y1="595.9" x2="932.5" y2="595.9" stroke="#e8e8e8" stroke-width="2.5"/><circle cx="794.7" cy="595.9" r="6.3" fill="url(#thumb)"/><circle cx="804.3" cy="646" r="5.5" fill="#ffffff"/><circle cx="804.3" cy="666.2" r="5.5" fill="#ffffff"/><circle cx="804.3" cy="666.2" r="2.5" fill="#222222"/><circle cx="804.3" cy="686" r="5.5" fill="#ffffff"/><rect x="1055.5" y="435" width="193.5" height="347" fill="#3c3c3c"/><line x1="1055.5" y1="505.5" x2="1841.2" y2="505.5" stroke="#747474" stroke-width="1"/><line x1="1055.5" y1="574.5" x2="1841.2" y2="574.5" stroke="#747474" stroke-width="1"/><line x1="1055.5" y1="644.5" x2="1841.2" y2="644.5" stroke="#747474" stroke-width="1"/><line x1="1055.5" y1="713.5" x2="1841.2" y2="713.5" stroke="#747474" stroke-width="1"/><line x1="1091.5" y1="435" x2="1091.5" y2="782.3" stroke="#747474" stroke-width="1"/><line x1="1144.5" y1="435" x2="1144.5" y2="782.3" stroke="#747474" stroke-width="1"/><line x1="1196.5" y1="435" x2="1196.5" y2="782.3" stroke="#747474" stroke-width="1"/><line x1="1249.5" y1="435" x2="1249.5" y2="782.3" stroke="#747474" stroke-width="1"/><line x1="1301.5" y1="435" x2="1301.5" y2="782.3" stroke="#747474" stroke-width="1"/><line x1="1354.5" y1="435" x2="1354.5" y2="782.3" stroke="#747474" stroke-width="1"/><line x1="1406.5" y1="435" x2="1406.5" y2="782.3" stroke="#747474" stroke-width="1"/><line x1="1459.5" y1="435" x2="1459.5" y2="782.3" stroke="#747474" stroke-width="1"/><line x1="1511.5" y1="435" x2="1511.5" y2="782.3" stroke="#747474" stroke-width="1"/><line x1="1564.5" y1="435" x2="1564.5" y2="782.3" stroke="#747474" stroke-width="1"/><line x1="1616.5" y1="435" x2="1616.5" y2="782.3" stroke="#747474" stroke-width="1"/><line x1="1669.5" y1="435" x2="1669.5" y2="782.3" stroke="#747474" stroke-width="1"/><line x1="1721.5" y1="435" x2="1721.5" y2="782.3" stroke="#747474" stroke-width="1"/><line x1="1774.5" y1="435" x2="1774.5" y2="782.3" stroke="#747474" stroke-width="1"/><line x1="1826.5" y1="435" x2="1826.5" y2="782.3" stroke="#747474" stroke-width="1"/><line x1="1055.5" y1="435.5" x2="1841.2" y2="435.5" stroke="#8c8c8c" stroke-width="1"/><line x1="1841.5" y1="435" x2="1841.5" y2="782.6" stroke="#8c8c8c" stroke-width="1"/><line x1="1055.5" y1="782.5" x2="1841.5" y2="782.5" stroke="#8c8c8c" stroke-width="1"/><line x1="1248.5" y1="435" x2="1248.5" y2="782.3" stroke="#9a9a50" stroke-width="1"/><path d="M1055.5,732.8 L1056.5,729.0 L1057.4,714.8 L1058.3,732.3 L1059.3,730.8 L1060.2,728.0 L1061.2,746.2 L1062.2,730.6 L1063.1,726.6 L1064.0,720.9 L1065.0,755.1 L1066.0,739.1 L1066.9,755.6 L1067.8,720.3 L1068.8,724.4 L1069.8,765.5 L1070.7,709.3 L1071.7,711.6 L1072.6,725.8 L1073.5,727.1 L1074.5,748.3 L1075.5,778.3 L1076.4,730.0 L1077.3,761.0 L1078.3,745.8 L1079.2,742.4 L1080.2,769.6 L1081.2,732.4 L1082.1,733.2 L1083.0,718.9 L1084.0,730.4 L1085.0,726.2 L1085.9,731.1 L1086.8,725.5 L1087.8,732.6 L1088.8,740.4 L1089.7,704.2 L1090.7,705.6 L1091.6,719.0 L1092.5,724.0 L1093.5,738.5 L1094.5,743.1 L1095.4,739.8 L1096.3,758.9 L1097.3,721.9 L1098.2,734.8 L1099.2,718.7 L1100.2,735.4 L1101.1,712.2 L1102.0,718.7 L1103.0,781.5 L1104.0,744.4 L1104.9,715.6 L1105.8,732.1 L1106.8,709.6 L1107.8,734.9 L1108.7,758.4 L1109.7,726.6 L1110.6,721.4 L1111.5,740.8 L1112.5,756.1 L1113.5,737.7 L1114.4,711.7 L1115.3,722.2 L1116.3,752.2 L1117.2,742.1 L1118.2,754.2 L1119.2,760.9 L1120.1,720.7 L1121.0,746.7 L1122.0,729.0 L1123.0,733.0 L1123.9,745.7 L1124.8,723.1 L1125.8,750.8 L1126.8,726.1 L1127.7,752.3 L1128.7,734.0 L1129.6,744.2 L1130.5,740.8 L1131.5,710.9 L1132.5,720.5 L1133.4,739.1 L1134.3,717.0 L1135.3,744.3 L1136.2,735.1 L1137.2,718.4 L1138.2,726.2 L1139.1,754.3 L1140.0,707.8 L1141.0,744.2 L1142.0,741.5 L1142.9,721.7 L1143.8,737.9 L1144.8,739.4 L1145.8,758.3 L1146.7,755.7 L1147.7,728.2 L1148.6,742.3 L1149.5,727.6 L1150.5,736.0 L1151.5,732.8 L1152.4,712.1 L1153.3,731.6 L1154.3,728.5 L1155.2,717.9 L1156.2,746.3 L1157.2,748.6 L1158.1,715.7 L1159.0,719.9 L1160.0,741.9 L1161.0,745.8 L1161.9,722.8 L1162.8,713.7 L1163.8,745.3 L1164.8,712.9 L1165.7,717.1 L1166.7,727.5 L1167.6,734.0 L1168.5,753.8 L1169.5,766.5 L1170.5,711.8 L1171.4,742.6 L1172.3,724.1 L1173.3,741.5 L1174.2,719.7 L1175.2,727.7 L1176.2,739.6 L1177.1,746.9 L1178.0,723.5 L1179.0,759.2 L1180.0,743.2 L1180.9,729.0 L1181.8,718.5 L1182.8,727.1 L1183.8,740.3 L1184.7,715.2 L1185.7,744.8 L1186.6,777.1 L1187.5,740.9 L1188.5,733.0 L1189.5,760.8 L1190.4,746.8 L1191.3,736.1 L1192.3,728.5 L1193.2,750.7 L1194.2,736.4 L1195.2,716.7 L1196.1,709.6 L1197.0,725.7 L1198.0,724.5 L1199.0,728.1 L1199.9,749.9 L1200.8,767.7 L1201.8,776.1 L1202.8,715.6 L1203.7,724.2 L1204.7,711.8 L1205.6,774.0 L1206.5,726.4 L1207.5,731.7 L1208.5,723.2 L1209.4,738.3 L1210.3,701.8 L1211.3,758.0 L1212.2,729.4 L1213.2,722.9 L1214.2,716.2 L1215.1,722.9 L1216.0,724.1 L1217.0,720.9 L1218.0,715.4 L1218.9,736.8 L1219.8,724.7 L1220.8,716.2 L1221.8,717.6 L1222.7,734.1 L1223.7,721.0 L1224.6,718.0 L1225.5,728.5 L1226.5,726.8 L1227.5,735.5 L1228.4,728.2 L1229.3,727.3 L1230.3,757.2 L1231.2,726.3 L1232.2,706.6 L1233.2,717.2 L1234.1,723.2 L1235.0,735.3 L1236.0,723.0 L1237.0,728.2 L1237.9,729.2 L1238.8,710.7 L1239.8,742.1 L1240.8,707.3 L1241.7,738.6 L1242.7,704.0 L1243.6,702.4 L1244.5,703.3 L1245.5,691.5 L1247.0,650.0 L1249.0,548.0 L1250.5,648.0 L1252.0,680.0 L1253.1,695.8 L1254.0,700.7 L1255.0,685.7 L1256.0,693.4 L1256.9,701.2 L1257.8,689.1 L1258.8,711.0 L1259.8,701.0 L1260.7,723.4 L1261.7,714.1 L1262.6,703.0 L1263.5,700.1 L1264.5,704.1 L1265.5,724.5 L1266.4,719.3 L1267.3,731.7 L1268.3,745.7 L1269.2,728.3 L1270.2,716.7 L1271.2,716.7 L1272.1,722.4 L1273.0,712.9 L1274.0,740.4 L1275.0,747.4 L1275.9,732.8 L1276.8,740.5 L1277.8,744.1 L1278.8,734.3 L1279.7,726.7 L1280.7,731.3 L1281.6,738.5 L1282.5,719.1 L1283.5,709.3 L1284.5,732.8 L1285.4,758.1 L1286.3,769.1 L1287.3,717.6 L1288.2,765.6 L1289.2,723.9 L1290.2,728.6 L1291.1,738.8 L1292.0,721.0 L1293.0,775.3 L1294.0,750.3 L1294.9,732.7 L1295.8,772.1 L1296.8,719.5 L1297.8,742.7 L1298.7,749.8 L1299.7,764.0 L1300.6,726.6 L1301.5,733.0 L1302.5,726.6 L1303.5,725.7 L1304.4,720.3 L1305.3,712.2 L1306.3,724.7 L1307.2,745.1 L1308.2,731.9 L1309.2,746.6 L1310.1,781.5 L1311.0,732.1 L1312.0,723.7 L1313.0,746.6 L1313.9,740.7 L1314.8,737.1 L1315.8,724.3 L1316.8,730.3 L1317.7,727.1 L1318.7,722.3 L1319.6,735.1 L1320.5,720.9 L1321.5,715.9 L1322.5,756.1 L1323.4,714.2 L1324.3,723.4 L1325.3,750.9 L1326.2,732.7 L1327.2,726.7 L1328.2,715.6 L1329.1,735.8 L1330.0,728.7 L1331.0,717.3 L1332.0,720.8 L1332.9,713.4 L1333.8,732.4 L1334.8,725.9 L1335.8,744.7 L1336.7,723.5 L1337.7,719.9 L1338.6,726.2 L1339.5,723.6 L1340.5,744.2 L1341.5,716.2 L1342.4,709.6 L1343.3,710.0 L1344.3,729.7 L1345.2,721.0 L1346.2,738.3 L1347.2,715.6 L1348.1,718.3 L1349.0,737.0 L1350.0,756.8 L1351.0,733.2 L1351.9,729.3 L1352.8,721.8 L1353.8,731.5 L1354.8,770.4 L1355.7,720.3 L1356.7,760.1 L1357.6,720.6 L1358.5,747.1 L1359.5,737.6 L1360.5,721.1 L1361.4,749.9 L1362.3,749.1 L1363.3,730.5 L1364.2,723.4 L1365.2,719.0 L1366.2,724.6 L1367.1,713.3 L1368.0,731.3 L1369.0,713.0 L1370.0,756.3 L1370.9,743.6 L1371.8,730.1 L1372.8,739.8 L1373.8,723.2 L1374.7,726.3 L1375.7,730.2 L1376.6,718.9 L1377.5,729.0 L1378.5,738.7 L1379.5,735.6 L1380.4,718.8 L1381.3,716.2 L1382.3,744.5 L1383.2,718.6 L1384.2,711.2 L1385.2,730.2 L1386.1,728.5 L1387.0,745.0 L1388.0,729.8 L1389.0,730.9 L1389.9,727.4 L1390.8,770.7 L1391.8,711.1 L1392.8,730.5 L1393.7,734.8 L1394.7,720.6 L1395.6,728.9 L1396.5,731.4 L1397.5,724.5 L1398.5,759.7 L1399.4,729.7 L1400.3,734.3 L1401.3,712.4 L1402.2,714.8 L1403.2,740.9 L1404.2,732.0 L1405.1,751.2 L1406.0,733.5 L1407.0,720.0 L1408.0,716.2 L1408.9,731.9 L1409.8,738.4 L1410.8,745.7 L1411.8,727.0 L1412.7,714.7 L1413.7,750.9 L1414.6,721.4 L1415.5,773.1 L1416.5,745.5 L1417.5,743.3 L1418.4,724.7 L1419.3,738.2 L1420.3,736.7 L1421.2,726.9 L1422.2,753.7 L1423.2,723.1 L1424.1,751.6 L1425.0,730.7 L1426.0,741.9 L1427.0,745.2 L1427.9,730.0 L1428.8,733.4 L1429.8,735.8 L1430.8,734.3 L1431.7,730.0 L1432.7,748.1 L1433.6,744.8 L1434.5,726.5 L1435.5,726.3 L1436.5,730.0 L1437.4,718.5 L1438.3,727.2 L1439.3,718.3 L1440.2,742.9 L1441.2,722.8 L1442.2,720.2 L1443.1,716.1 L1444.0,738.5 L1445.0,738.5 L1446.0,714.9 L1447.2,712.0 L1448.0,658.0 L1448.8,712.0 L1449.8,750.5 L1450.7,742.5 L1451.7,723.3 L1452.6,741.4 L1453.5,754.7 L1454.5,719.4 L1455.5,734.0 L1456.4,721.0 L1457.3,751.3 L1458.3,734.7 L1459.2,724.7 L1460.2,776.2 L1461.2,745.0 L1462.1,724.8 L1463.0,715.6 L1464.0,711.2 L1465.0,752.5 L1465.9,730.8 L1466.8,722.2 L1467.8,730.9 L1468.8,724.7 L1469.7,745.8 L1470.7,758.8 L1471.6,753.6 L1472.5,766.9 L1473.5,729.2 L1474.5,730.5 L1475.4,728.7 L1476.3,749.3 L1477.3,746.2 L1478.2,744.8 L1479.2,719.0 L1480.2,707.5 L1481.1,714.6 L1482.0,755.0 L1483.0,760.5 L1484.0,712.8 L1484.9,732.4 L1485.8,721.9 L1486.8,738.0 L1487.8,732.2 L1488.7,730.5 L1489.7,733.6 L1490.6,727.6 L1491.5,779.9 L1492.5,724.2 L1493.5,718.8 L1494.4,746.4 L1495.3,732.7 L1496.3,722.9 L1497.2,734.6 L1498.2,745.4 L1499.2,747.7 L1500.1,730.6 L1501.0,778.0 L1502.0,716.6 L1503.0,720.6 L1503.9,724.1 L1504.8,718.1 L1505.8,726.6 L1506.8,734.6 L1507.7,727.6 L1508.7,730.9 L1509.6,709.2 L1510.5,720.4 L1511.5,741.5 L1512.5,715.6 L1513.4,722.7 L1514.3,721.5 L1515.3,720.1 L1516.2,734.6 L1517.2,716.4 L1518.2,717.2 L1519.1,724.4 L1520.0,721.9 L1521.0,721.9 L1522.0,734.6 L1522.9,723.4 L1523.8,758.8 L1524.8,737.3 L1525.8,732.2 L1526.7,781.5 L1527.7,736.7 L1528.6,726.3 L1529.5,726.8 L1530.5,743.0 L1531.5,713.4 L1532.4,725.4 L1533.3,737.5 L1534.3,725.6 L1535.2,728.6 L1536.2,729.9 L1537.2,735.2 L1538.1,699.2 L1539.0,726.2 L1540.0,724.2 L1541.0,722.1 L1541.9,709.6 L1542.8,773.1 L1543.8,727.1 L1544.8,722.9 L1545.7,741.5 L1546.7,734.8 L1547.6,763.1 L1548.5,745.4 L1549.5,735.8 L1550.5,754.5 L1551.4,741.9 L1552.3,715.9 L1553.3,729.3 L1554.2,730.8 L1555.2,711.3 L1556.2,728.7 L1557.1,705.8 L1558.0,726.3 L1559.0,720.3 L1560.0,757.9 L1560.9,727.7 L1561.8,722.1 L1562.8,764.5 L1563.8,714.4 L1564.7,748.1 L1565.7,732.1 L1566.6,747.4 L1567.5,731.2 L1568.5,727.2 L1569.4,761.2 L1570.4,713.3 L1571.3,734.0 L1572.3,730.1 L1573.2,727.7 L1574.2,736.2 L1575.2,740.0 L1576.1,725.7 L1577.0,728.9 L1578.0,740.1 L1578.9,723.6 L1579.9,739.5 L1580.8,779.2 L1581.8,742.2 L1582.8,765.2 L1583.7,748.4 L1584.7,722.3 L1585.6,735.2 L1586.5,716.3 L1587.5,722.5 L1588.4,763.2 L1589.4,707.9 L1590.3,713.4 L1591.3,758.3 L1592.2,715.9 L1593.2,733.7 L1594.2,731.9 L1595.1,710.6 L1596.0,742.3 L1597.0,730.2 L1597.9,713.9 L1598.9,723.4 L1599.8,732.2 L1600.8,709.8 L1601.8,720.0 L1602.7,727.5 L1603.7,752.5 L1604.6,726.8 L1605.5,732.7 L1606.5,744.8 L1607.4,762.7 L1608.4,730.1 L1609.3,751.5 L1610.3,733.1 L1611.2,725.3 L1612.2,732.7 L1613.2,741.2 L1614.1,728.2 L1615.0,734.0 L1616.0,721.5 L1616.9,730.0 L1617.9,704.3 L1618.8,712.7 L1619.8,723.0 L1620.8,742.6 L1621.7,752.6 L1622.7,716.6 L1623.6,721.2 L1624.5,726.8 L1625.5,736.5 L1626.4,740.7 L1627.4,724.7 L1628.3,728.8 L1629.3,727.9 L1630.2,726.5 L1631.2,722.4 L1632.2,745.8 L1633.1,742.0 L1634.0,709.7 L1635.0,715.3 L1635.9,717.3 L1636.9,766.2 L1637.8,760.8 L1638.8,740.8 L1639.8,733.8 L1640.7,726.8 L1641.7,754.0 L1642.6,729.6 L1643.5,758.5 L1644.5,756.2 L1645.4,725.0 L1646.4,729.3 L1647.3,726.5 L1648.3,735.9 L1649.2,731.8 L1650.2,744.3 L1651.2,737.2 L1652.1,722.7 L1653.0,719.1 L1654.0,758.2 L1654.9,752.0 L1655.9,720.3 L1656.8,726.8 L1657.8,721.8 L1658.8,744.2 L1659.7,733.9 L1660.7,741.5 L1661.6,720.2 L1662.5,736.1 L1663.5,725.8 L1664.4,707.8 L1665.4,738.0 L1666.3,729.3 L1667.3,722.6 L1668.2,715.0 L1669.2,733.7 L1670.2,736.1 L1671.1,754.7 L1672.0,717.5 L1673.0,757.5 L1673.9,756.8 L1674.9,728.8 L1675.8,731.6 L1676.8,724.7 L1677.8,739.3 L1678.7,721.6 L1679.7,757.9 L1680.6,744.2 L1681.5,725.5 L1682.5,757.0 L1683.4,739.1 L1684.4,723.4 L1685.3,724.4 L1686.3,740.1 L1687.2,749.6 L1688.2,736.6 L1689.2,723.3 L1690.1,736.2 L1691.0,752.2 L1692.0,723.9 L1692.9,728.6 L1693.9,715.1 L1694.8,713.7 L1695.8,715.5 L1696.8,733.3 L1697.7,720.5 L1698.7,739.0 L1699.6,738.4 L1700.5,734.8 L1701.5,714.1 L1702.4,716.5 L1703.4,742.0 L1704.3,736.4 L1705.3,736.2 L1706.2,736.3 L1707.2,735.0 L1708.2,735.3 L1709.1,745.4 L1710.0,728.8 L1711.0,720.7 L1711.9,729.6 L1712.9,719.2 L1713.8,728.9 L1714.8,746.8 L1715.8,722.2 L1716.7,717.2 L1717.7,740.2 L1718.6,773.4 L1719.5,730.5 L1720.5,729.5 L1721.4,728.7 L1722.4,711.4 L1723.3,725.9 L1724.3,720.5 L1725.2,760.1 L1726.2,729.4 L1727.2,721.1 L1728.1,756.6 L1729.0,757.0 L1730.0,722.9 L1730.9,716.3 L1731.9,756.5 L1732.8,726.4 L1733.8,749.5 L1734.8,722.6 L1735.7,725.9 L1736.7,742.2 L1737.6,743.7 L1738.5,721.9 L1739.5,730.3 L1740.4,721.9 L1741.4,735.0 L1742.3,737.5 L1743.3,711.2 L1744.2,725.2 L1745.2,731.3 L1746.2,729.7 L1747.1,723.5 L1748.0,723.9 L1749.0,715.4 L1749.9,734.4 L1750.9,719.6 L1751.8,725.3 L1752.8,718.4 L1753.8,720.4 L1754.7,719.3 L1755.7,716.8 L1756.6,712.3 L1757.5,726.2 L1758.5,730.2 L1759.4,723.9 L1760.4,720.5 L1761.3,734.0 L1762.3,734.0 L1763.2,749.3 L1764.2,722.8 L1765.2,707.3 L1766.1,735.8 L1767.0,747.5 L1768.0,744.8 L1768.9,733.8 L1769.9,739.7 L1770.8,711.0 L1771.8,761.1 L1772.8,738.8 L1773.7,752.5 L1774.7,726.0 L1775.6,721.5 L1776.5,746.6 L1777.5,760.4 L1778.4,732.5 L1779.4,728.1 L1780.3,715.7 L1781.3,767.3 L1782.2,753.3 L1783.2,746.2 L1784.2,743.9 L1785.1,742.8 L1786.0,723.6 L1787.0,727.8 L1787.9,743.5 L1788.9,746.1 L1789.8,740.2 L1790.8,747.1 L1791.8,722.2 L1792.7,738.7 L1793.7,729.4 L1794.6,720.0 L1795.5,731.8 L1796.5,741.3 L1797.4,716.9 L1798.4,715.4 L1799.3,737.3 L1800.3,729.4 L1801.2,712.3 L1802.2,731.7 L1803.2,743.7 L1804.1,763.3 L1805.0,713.1 L1806.0,720.6 L1806.9,735.4 L1807.9,730.1 L1808.8,730.5 L1809.8,740.6 L1810.8,707.6 L1811.7,725.7 L1812.7,742.6 L1813.6,781.5 L1814.5,732.0 L1815.5,736.0 L1816.4,720.8 L1817.4,723.8 L1818.3,727.4 L1819.3,748.3 L1820.2,748.4 L1821.2,738.2 L1822.2,741.4 L1823.1,717.7 L1824.0,730.5 L1825.0,726.4 L1825.9,706.7 L1826.9,741.0 L1827.8,729.8 L1828.8,748.9 L1829.8,721.7 L1830.7,781.5 L1831.7,719.8 L1832.6,718.8 L1833.5,719.8 L1834.5,756.8 L1835.4,740.8 L1836.4,723.6 L1837.3,754.7 L1838.3,731.8 L1839.2,732.2 L1840.2,712.5 L1841.2,728.0" fill="none" stroke="#cccccc" stroke-width="0.9" stroke-linejoin="round" clip-path="url(#circlip)"/><circle cx="1249" cy="548" r="4" fill="#ffff00"/><circle cx="1448" cy="658" r="4" fill="#e00000"/><text x="0" y="0" transform="translate(613.3,104.5) rotate(-90)" text-anchor="middle" font-family="Liberation Sans" font-size="16" fill="#ffffff">Magnitude (dB)</text><text x="0" y="0" transform="translate(990.8,609.4) rotate(-90)" text-anchor="middle" font-family="Liberation Sans" font-size="13.3" fill="#ffffff">Magnitude (dB)</text></svg>
<div class="t" style="left:12.52px;top:16.20px;color:#dddddd;transform:scaleX(1.0835);">Connection</div><div class="t" style="left:124.99px;top:16.10px;color:#dddddd;transform:scaleX(1.0092);">Recorder</div><div class="t" style="left:218.22px;top:16.10px;color:#ffffff;transform:scaleX(0.9818);">FC0013</div><div class="t" style="left:13.00px;top:54.85px;color:#ffffff;font-size:17px;line-height:17px;transform:scaleX(0.9389);">AGC</div><div class="t" style="left:122.73px;top:56.00px;color:#ffffff;transform:scaleX(1.0696);">On/Off</div><div class="t" style="left:11.56px;top:93.15px;color:#ffffff;font-size:17px;line-height:17px;transform:scaleX(1.0412);">Gain</div><div class="t" style="left:12.51px;top:132.25px;color:#ffffff;font-size:17px;line-height:17px;transform:scaleX(1.0882);">Corr.</div><div class="t" style="left:12.06px;top:169.55px;color:#ffffff;font-size:17px;line-height:17px;transform:scaleX(1.0436);">Delta</div><div class="t" style="left:116.62px;top:130.65px;color:#e4ffd8;font-size:17px;line-height:17px;transform:scaleX(1.1766);">042 ppm</div><div class="t" style="left:116.67px;top:168.35px;color:#e4ffd8;font-size:17px;line-height:17px;transform:scaleX(1.1328);">000 kHz</div><div class="t" style="left:378.30px;top:18.80px;color:#ffffff;font-size:12px;line-height:12px;">Zoom X</div><div class="t" style="left:378.30px;top:78.60px;color:#ffffff;font-size:12px;line-height:12px;">Zoom Y</div><div class="t" style="left:389.79px;top:133.90px;color:#ffffff;font-size:12px;line-height:12px;transform:scaleX(1.0114);">Mouse</div><div class="t" style="left:389.81px;top:150.00px;color:#ffffff;font-size:12px;line-height:12px;transform:scaleX(0.9923);">Click and Drag Zooms</div><div class="t" style="left:642.70px;top:-9.93px;color:#f4f4f4;font-size:13.8px;line-height:13.8px;">20.0</div><div class="t" style="left:650.70px;top:61.37px;color:#f4f4f4;font-size:13.8px;line-height:13.8px;">0.0</div><div class="t" style="left:638.70px;top:133.47px;color:#f4f4f4;font-size:13.8px;line-height:13.8px;">-20.0</div><div class="t" style="left:638.70px;top:205.47px;color:#f4f4f4;font-size:13.8px;line-height:13.8px;">-40.0</div><div class="t" style="left:638.70px;top:276.57px;color:#f4f4f4;font-size:13.8px;line-height:13.8px;">-60.0</div><div class="t" style="left:723.00px;top:290.37px;color:#f4f4f4;font-size:13.8px;line-height:13.8px;">209</div><div class="t" style="left:827.57px;top:290.37px;color:#f4f4f4;font-size:13.8px;line-height:13.8px;">209.2</div><div class="t" style="left:938.14px;top:290.37px;color:#f4f4f4;font-size:13.8px;line-height:13.8px;">209.4</div><div class="t" style="left:1048.71px;top:290.37px;color:#f4f4f4;font-size:13.8px;line-height:13.8px;">209.6</div><div class="t" style="left:1159.28px;top:290.37px;color:#f4f4f4;font-size:13.8px;line-height:13.8px;">209.8</div><div class="t" style="left:1275.35px;top:290.37px;color:#f4f4f4;font-size:13.8px;line-height:13.8px;">210</div><div class="t" style="left:1380.42px;top:290.37px;color:#f4f4f4;font-size:13.8px;line-height:13.8px;">210.2</div><div class="t" style="left:1490.99px;top:290.37px;color:#f4f4f4;font-size:13.8px;line-height:13.8px;">210.4</div><div class="t" style="left:1601.56px;top:290.37px;color:#f4f4f4;font-size:13.8px;line-height:13.8px;">210.6</div><div class="t" style="left:1712.13px;top:290.37px;color:#f4f4f4;font-size:13.8px;line-height:13.8px;">210.8</div><div class="t" style="left:1189.20px;top:312.20px;color:#f4f4f4;">Frequency (MHz)</div><div class="t" style="left:6.05px;top:367.38px;color:#ffffff;font-style:italic;font-size:16.5px;line-height:16.5px;transform:scaleX(0.9524);">DAB+</div><div class="t" style="left:65.26px;top:368.15px;color:#ffffff;font-size:13px;line-height:13px;transform:scaleX(0.9409);">10A</div><div class="t" style="left:149.50px;top:367.20px;color:#ff6b6b;transform:scaleX(0.8956);">EId: F797</div><div class="t" style="left:232.39px;top:367.10px;color:#d6e02a;transform:scaleX(1.0062);">Innlandet</div><div class="t" style="left:318.80px;top:367.10px;color:#ebebeb;">2025-01-19</div><div class="t" style="left:408.43px;top:367.10px;color:#ebebeb;transform:scaleX(0.9653);">07:15:50 Z</div><div class="t" style="left:692.07px;top:367.20px;color:#ebebeb;transform:scaleX(0.9265);">SId: F595</div><div class="t" style="left:786.63px;top:360.95px;color:#f2f21e;font-size:23px;line-height:23px;transform:scaleX(0.9340);">METRO ROMERIKE</div><div class="t" style="left:1014.01px;top:367.40px;color:#ebebeb;transform:scaleX(0.9873);">64 kbps</div><div class="t" style="left:1079.70px;top:367.40px;color:#ebebeb;transform:scaleX(0.8950);">EEP 3-A</div><div class="t" style="left:1836.28px;top:367.10px;color:#ffffff;font-size:12px;line-height:12px;transform:scaleX(1.0217);">DAB</div><div class="t" style="left:0.55px;top:399.93px;color:#f0f020;font-size:19.5px;line-height:19.5px;transform:scaleX(0.9243);">METRO ROMERIKE</div><div class="t" style="left:2.68px;top:434.10px;color:#f2f8ff;transform:scaleX(0.9239);">BEAT INNLANDET</div><div class="t" style="left:2.66px;top:459.39px;color:#f2f8ff;transform:scaleX(0.9439);">DANSBAND RADIOEN</div><div class="t" style="left:2.64px;top:484.68px;color:#f2f8ff;transform:scaleX(0.9576);">ElverumsRadioen</div><div class="t" style="left:2.62px;top:509.97px;color:#f2f8ff;transform:scaleX(0.9772);">Gudb.dalRadioen</div><div class="t" style="left:2.62px;top:535.26px;color:#f2f8ff;transform:scaleX(0.9802);">HamarRadioen</div><div class="t" style="left:3.60px;top:560.55px;color:#f2f8ff;transform:scaleX(0.9859);">Jul i Innlandet</div><div class="t" style="left:2.71px;top:585.84px;color:#f2f8ff;transform:scaleX(0.8938);">METRO CLASSIC</div><div class="t" style="left:2.67px;top:611.13px;color:#f2f8ff;transform:scaleX(0.9309);">METRO INNLANDET</div><div class="t" style="left:2.70px;top:636.42px;color:#f2f8ff;transform:scaleX(0.8959);">METRO ROMERIKE</div><div class="t" style="left:2.62px;top:661.71px;color:#f2f8ff;transform:scaleX(0.9802);">ØsterdalsRadioen</div><div class="t" style="left:2.61px;top:687.00px;color:#f2f8ff;transform:scaleX(0.9935);">pTro</div><div class="t" style="left:2.64px;top:712.29px;color:#f2f8ff;transform:scaleX(0.9618);">Radio 3,16</div><div class="t" style="left:2.68px;top:737.58px;color:#f2f8ff;transform:scaleX(0.9239);">RADIO ROX</div><div class="t" style="left:2.60px;top:762.87px;color:#f2f8ff;">Radio Toten</div><div class="t" style="left:2.62px;top:788.16px;color:#f2f8ff;transform:scaleX(0.9769);">RadioKongsvinger</div><div class="t" style="left:2.62px;top:813.45px;color:#f2f8ff;transform:scaleX(0.9848);">RadioMG</div><div class="t" style="left:201.28px;top:400.15px;color:#ffffff;font-size:19px;line-height:19px;transform:scaleX(1.0197);">Service Quality</div><div class="t" style="left:206.20px;top:444.95px;color:#ffffff;font-size:13px;line-height:13px;">SNR (dB)</div><div class="t" style="left:206.18px;top:475.60px;color:#ffffff;font-size:13px;line-height:13px;transform:scaleX(1.0217);">FIC (ok %)</div><div class="t" style="left:206.21px;top:506.25px;color:#ffffff;font-size:13px;line-height:13px;transform:scaleX(0.9931);">RS (ok %)</div><div class="t" style="left:206.12px;top:536.90px;color:#ffffff;font-size:13px;line-height:13px;transform:scaleX(1.0779);">Null Symbol</div><div class="t" style="left:206.16px;top:567.55px;color:#ffffff;font-size:13px;line-height:13px;transform:scaleX(1.0450);">SymbolTime (ms)</div><div class="t" style="left:206.17px;top:598.20px;color:#ffffff;font-size:13px;line-height:13px;transform:scaleX(1.0298);">FrameTime (ms)</div><div class="t" style="left:338.00px;top:445.53px;color:#f0f0f0;font-size:11.5px;line-height:11.5px;">6,9</div><div class="t" style="left:340.00px;top:476.18px;color:#fff0c0;font-size:11.5px;line-height:11.5px;">85</div><div class="t" style="left:343.50px;top:506.83px;color:#f0f0f0;font-size:11.5px;line-height:11.5px;">0</div><div class="t" style="left:335.50px;top:568.12px;color:#f8f8f8;font-size:11.5px;line-height:11.5px;">0,19</div><div class="t" style="left:335.00px;top:598.77px;color:#b8ffb0;font-size:11.5px;line-height:11.5px;">96,0</div><div class="t" style="left:400.28px;top:407.50px;color:#e8e8e8;transform:scaleX(1.0206);">Sync</div><div class="t" style="left:462.20px;top:407.50px;color:#ffffff;transform:scaleX(0.9647);">TII</div><div class="t" style="left:506.20px;top:407.50px;color:#e8e8e8;transform:scaleX(1.0950);">Audio</div><div class="t" style="left:576.60px;top:407.50px;color:#e8e8e8;transform:scaleX(0.9812);">AAC</div><div class="t" style="left:633.50px;top:407.50px;color:#e8e8e8;transform:scaleX(1.0963);">Options</div><div class="t" style="left:395.43px;top:476.70px;color:#ffffff;font-size:14px;line-height:14px;transform:scaleX(1.0651);">Pattern</div><div class="t" style="left:462.18px;top:476.70px;color:#ffffff;font-size:14px;line-height:14px;transform:scaleX(1.1250);">MainId</div><div class="t" style="left:527.93px;top:476.70px;color:#ffffff;font-size:14px;line-height:14px;transform:scaleX(1.0686);">SubId</div><div class="t" style="left:586.31px;top:476.70px;color:#ffffff;font-size:14px;line-height:14px;transform:scaleX(1.0941);">Strength</div><div class="t" style="left:397.60px;top:506.30px;color:#ffffff;font-size:14px;line-height:14px;transform:scaleX(0.9483);">0xc3</div><div class="t" style="left:464.50px;top:506.30px;color:#ffffff;font-size:14px;line-height:14px;">55</div><div class="t" style="left:529.17px;top:506.30px;color:#ffffff;font-size:14px;line-height:14px;transform:scaleX(1.3333);">2</div><div class="t" style="left:588.80px;top:506.30px;color:#ffffff;font-size:14px;line-height:14px;transform:scaleX(0.9074);">0.61</div><div class="t" style="left:659.40px;top:446.92px;color:#ffffff;font-size:13.5px;line-height:13.5px;transform:scaleX(1.0136);">Threshold</div><div class="t" style="left:672.70px;top:606.23px;color:#ffffff;font-size:13.5px;line-height:13.5px;transform:scaleX(0.9462);">0.04</div><div class="t" style="left:1231.18px;top:395.30px;color:#ffffff;font-size:14px;line-height:14px;transform:scaleX(1.0192);">Channel Impulse Response (CIR)</div><div class="t" style="left:803.87px;top:425.80px;color:#ffffff;font-size:12px;line-height:12px;transform:scaleX(0.9333);">Freeze</div><div class="t" style="left:875.00px;top:425.80px;color:#ffffff;font-size:12px;line-height:12px;">Gradient</div><div class="t" style="left:791.60px;top:467.10px;color:#ffffff;font-size:12px;line-height:12px;">Smoothing Level</div><div class="t" style="left:792.60px;top:520.80px;color:#ffffff;font-size:12px;line-height:12px;transform:scaleX(0.9881);">Zoom X</div><div class="t" style="left:792.60px;top:570.80px;color:#ffffff;font-size:12px;line-height:12px;">Zoom Y</div><div class="t" style="left:792.60px;top:621.30px;color:#ffffff;font-size:12px;line-height:12px;transform:scaleX(0.9875);">x-Axis</div><div class="t" style="left:816.03px;top:640.30px;color:#ffffff;font-size:12px;line-height:12px;transform:scaleX(0.9667);">Samples</div><div class="t" style="left:816.01px;top:660.30px;color:#ffffff;font-size:12px;line-height:12px;transform:scaleX(0.9889);">Distance</div><div class="t" style="left:817.00px;top:680.30px;color:#ffffff;font-size:12px;line-height:12px;transform:scaleX(0.9615);">Time</div><div class="t" style="left:1012.00px;top:428.87px;color:#f4f4f4;font-size:13.8px;line-height:13.8px;">-10.0</div><div class="t" style="left:1012.00px;top:498.27px;color:#f4f4f4;font-size:13.8px;line-height:13.8px;">-20.0</div><div class="t" style="left:1012.00px;top:567.67px;color:#f4f4f4;font-size:13.8px;line-height:13.8px;">-30.0</div><div class="t" style="left:1012.00px;top:637.07px;color:#f4f4f4;font-size:13.8px;line-height:13.8px;">-40.0</div><div class="t" style="left:1012.00px;top:706.47px;color:#f4f4f4;font-size:13.8px;line-height:13.8px;">-50.0</div><div class="t" style="left:1012.00px;top:775.87px;color:#f4f4f4;font-size:13.8px;line-height:13.8px;">-60.0</div><div class="t" style="left:1081.00px;top:789.67px;color:#f4f4f4;font-size:13.8px;line-height:13.8px;">-60</div><div class="t" style="left:1133.50px;top:789.67px;color:#f4f4f4;font-size:13.8px;line-height:13.8px;">-40</div><div class="t" style="left:1186.00px;top:789.67px;color:#f4f4f4;font-size:13.8px;line-height:13.8px;">-20</div><div class="t" style="left:1245.50px;top:789.67px;color:#f4f4f4;font-size:13.8px;line-height:13.8px;">0</div><div class="t" style="left:1293.50px;top:789.67px;color:#f4f4f4;font-size:13.8px;line-height:13.8px;">20</div><div class="t" style="left:1346.50px;top:789.67px;color:#f4f4f4;font-size:13.8px;line-height:13.8px;">40</div><div class="t" style="left:1398.50px;top:789.67px;color:#f4f4f4;font-size:13.8px;line-height:13.8px;">60</div><div class="t" style="left:1451.00px;top:789.67px;color:#f4f4f4;font-size:13.8px;line-height:13.8px;">80</div><div class="t" style="left:1499.50px;top:789.67px;color:#f4f4f4;font-size:13.8px;line-height:13.8px;">100</div><div class="t" style="left:1552.00px;top:789.67px;color:#f4f4f4;font-size:13.8px;line-height:13.8px;">120</div><div class="t" style="left:1604.50px;top:789.67px;color:#f4f4f4;font-size:13.8px;line-height:13.8px;">140</div><div class="t" style="left:1657.00px;top:789.67px;color:#f4f4f4;font-size:13.8px;line-height:13.8px;">160</div><div class="t" style="left:1709.50px;top:789.67px;color:#f4f4f4;font-size:13.8px;line-height:13.8px;">180</div><div class="t" style="left:1762.00px;top:789.67px;color:#f4f4f4;font-size:13.8px;line-height:13.8px;">200</div><div class="t" style="left:1814.50px;top:789.67px;color:#f4f4f4;font-size:13.8px;line-height:13.8px;">220</div><div class="t" style="left:1370.70px;top:811.10px;color:#ffffff;font-size:14px;line-height:14px;">Distance Difference (km)</div>
</body></html>
